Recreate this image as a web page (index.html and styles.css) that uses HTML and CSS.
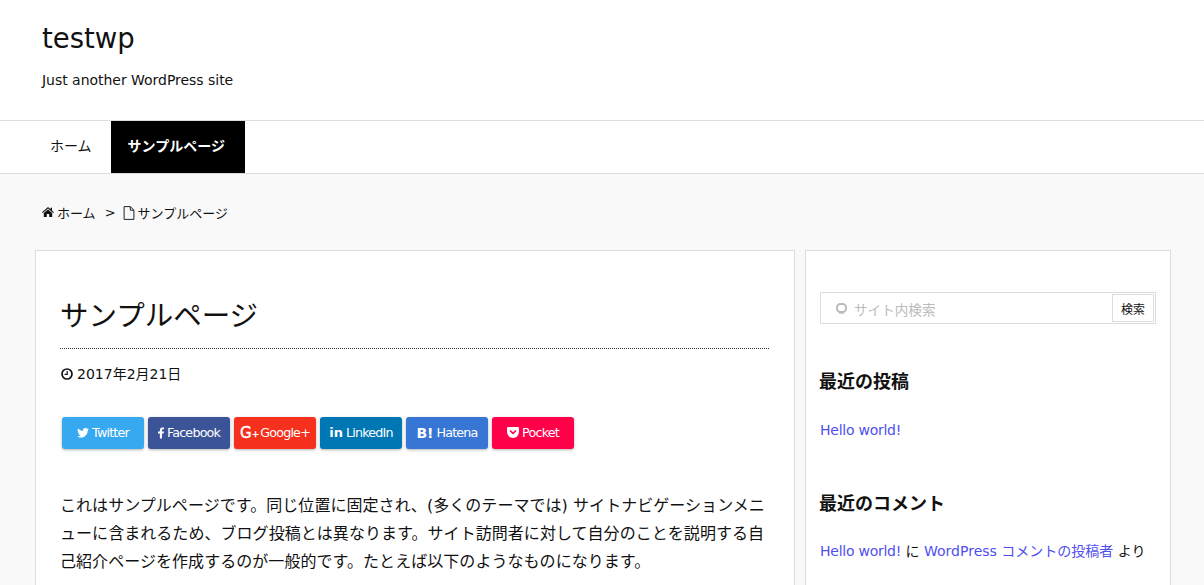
FILE: index.html
```html
<!DOCTYPE html>
<html lang="ja">
<head>
<meta charset="utf-8">
<title>サンプルページ | testwp</title>
<link rel="stylesheet" href="styles.css">
</head>
<body>
<div class="page">
  <header class="site-header">
    <h1 class="site-title">testwp</h1>
    <p class="site-desc">Just another WordPress site</p>
  </header>
  <nav class="site-nav">
    <a class="nav-item" href="#">ホーム</a>
    <a class="nav-item nav-current" href="#">サンプルページ</a>
  </nav>
  <div class="crumbs">
    <svg class="crumb-home" viewBox="0 0 12 10" width="12" height="10"><path d="M6 0 0 5.200l.7.8L6 1.500 11.300 6l.7-.8L10 3.500V.8H8.500v1.400zM1.800 6v4h3V7h2.400v3h3V6L6 2.500z" fill="#111"/></svg>
    <a class="crumb-link" href="#">ホーム</a>
    <span class="crumb-sep">&gt;</span>
    <svg class="crumb-doc" viewBox="0 0 11 14" width="12" height="14"><path d="M.6.600h6.200l3.600 3.600v9.200H.6zM6.800.600v3.600h3.600" fill="none" stroke="#222" stroke-width="1"/></svg>
    <span class="crumb-text">サンプルページ</span>
  </div>
  <div class="columns">
    <main class="card article">
      <h2 class="entry-title">サンプルページ</h2>
      <div class="entry-date">
        <svg viewBox="0 0 12 12" width="12" height="12"><circle cx="6" cy="6" r="5" fill="none" stroke="#111" stroke-width="1.700"/><path d="M6.200 3v3.400H3.600" fill="none" stroke="#111" stroke-width="1.200"/></svg>
        <span>2017年2月21日</span>
      </div>
      <div class="shares">
        <a class="share twitter" href="#"><svg viewBox="0 0 14 12" width="12" height="10"><path d="M14 1.400a5.700 5.700 0 0 1-1.650.45A2.900 2.900 0 0 0 13.600.25a5.700 5.700 0 0 1-1.820.7A2.870 2.870 0 0 0 6.900 3.550 8.150 8.150 0 0 1 1 .55a2.870 2.870 0 0 0 .89 3.830 2.860 2.860 0 0 1-1.300-.36c0 1.400 1 2.600 2.300 2.860a2.870 2.870 0 0 1-1.300.05 2.870 2.870 0 0 0 2.680 2A5.760 5.760 0 0 1 0 10.100 8.130 8.130 0 0 0 12.560 3.250 5.800 5.800 0 0 0 14 1.400z" fill="#fff"/></svg>Twitter</a>
        <a class="share facebook" href="#"><svg viewBox="0 0 7 13" width="6" height="12"><path d="M4.600 13V7.100h2l.3-2.300H4.600V3.300c0-.7.200-1.100 1.100-1.100H7V.1C6.800.1 6 0 5.200 0 3.400 0 2.200 1.100 2.200 3.100v1.700H0v2.300h2.200V13z" fill="#fff"/></svg>Facebook</a>
        <a class="share google" href="#"><span class="gplus">G<small>+</small></span>Google+</a>
        <a class="share linkedin" href="#"><span class="inmark">in</span>LinkedIn</a>
        <a class="share hatena" href="#"><span class="bmark">B!</span>Hatena</a>
        <a class="share pocket" href="#"><svg viewBox="0 0 13 12" width="12" height="11"><path d="M1.300 0h10.400c.7 0 1.300.6 1.300 1.300v4.200a6.500 6.500 0 0 1-13 0V1.300C0 .6.600 0 1.300 0z" fill="#fff"/><path d="m3.700 4.300 2.800 2.700 2.800-2.700" fill="none" stroke="#ff0049" stroke-width="1.700" stroke-linecap="round"/></svg>Pocket</a>
      </div>
      <p class="entry-body">これはサンプルページです。同じ位置に固定され、(多くのテーマでは) サイトナビゲーションメニューに含まれるため、ブログ投稿とは異なります。サイト訪問者に対して自分のことを説明する自己紹介ページを作成するのが一般的です。たとえば以下のようなものになります。</p>
    </main>
    <aside class="card sidebar">
      <form class="search">
        <div class="search-hint"><svg class="search-glyph" viewBox="0 0 11 11" width="11" height="11"><rect x="1" y="1" width="9" height="8" rx="3.500" fill="none" stroke="#bbb" stroke-width="2"/><path d="M3 10h5" stroke="#bbb" stroke-width="1.500"/></svg>サイト内検索</div>
        <button class="search-btn" type="button">検索</button>
      </form>
      <h3 class="widget-title recent-posts">最近の投稿</h3>
      <a class="link link-tight" href="#">Hello world!</a>
      <h3 class="widget-title recent-comments">最近のコメント</h3>
      <p class="comment"><a class="link link-tight" href="#">Hello world!</a> に <a class="link" href="#">WordPress コメントの投稿者</a> より</p>
    </aside>
  </div>
</div>
</body>
</html>
```
FILE: styles.css
```css
* { box-sizing: border-box; }
html, body { margin: 0; padding: 0; }
body {
  background: #f9f9f9;
  color: #111;
  font-family: "DejaVu Sans", "Noto Sans CJK JP", sans-serif;
  font-size: 14px;
}
.page { height: 585px; overflow: hidden; }
a { text-decoration: none; color: inherit; }

.site-header {
  height: 121px;
  background: #fff;
  border-bottom: 1px solid #ddd;
  padding: 20px 42px 0;
}
.site-title { margin: 0; font-size: 27.500px; font-weight: 400; line-height: 36px; color: #111; }
.site-desc { margin: 14px 0 0; font-size: 14px; line-height: 20px; letter-spacing: -.03px; }

.site-nav {
  display: flex;
  height: 53px;
  background: #fff;
  border-bottom: 1px solid #ddd;
  padding-left: 35px;
}
.nav-item {
  display: flex;
  align-items: center;
  padding: 0 18px 5px 15px;
  font-size: 14px;
  height: 52px;
  white-space: nowrap;
}
.nav-current {
  background: #000;
  color: #fff;
  font-weight: 700;
  padding: 0 0 5px 17px;
  width: 134px;
  margin-left: 1px;
}

.crumbs {
  display: flex;
  align-items: center;
  height: 76px;
  padding: 0 42px 0;
  font-size: 13px;
}
.crumb-home { margin-right: 3px; }
.crumb-sep { margin: 0 7px 0 9px; }
.crumb-doc { margin: 1px 3px 0 0; }

.columns {
  display: flex;
  gap: 10px;
  padding-left: 35px;
  align-items: stretch;
}
.card { background: #fff; border: 1px solid #ddd; }
.article { width: 760px; height: 400px; padding: 25px 25px 0 25px; }
.sidebar { width: 366px; height: 400px; padding: 41px 14px 0; }

.entry-title {
  margin: 0 0 0 -1px;
  padding: 21px 0 11px;
  font-size: 28.500px;
  line-height: 40px;
  font-weight: 400;
  border-bottom: 1px dotted #333;
}
.entry-date {
  display: flex;
  align-items: center;
  gap: 4px;
  margin-top: 15px;
  line-height: 20px;
  font-size: 14px;
}
.shares { display: flex; gap: 4px; margin: 33px 0 0 1px; }
.share {
  display: flex;
  align-items: center;
  justify-content: center;
  gap: 3px;
  width: 82px;
  height: 32px;
  padding-bottom: 1px;
  border-radius: 3px;
  color: #fff;
  font-size: 12.700px;
  letter-spacing: -.8px;
  box-shadow: 0 1px 3px rgba(0,0,0,.3);
}
.twitter { background: #37a9f0; }
.facebook { background: #3b5497; }
.google { background: #f5301c; gap: 1px; }
.linkedin { background: #0077b5; }
.hatena { background: #3776d4; }
.pocket { background: #ff0049; }
.gplus { font-weight: 400; font-size: 15px; letter-spacing: 0; -webkit-text-stroke: .4px #fff; }
.gplus small { font-size: 9px; vertical-align: 1px; }
.inmark { font-weight: 700; font-size: 13px; letter-spacing: 0; }
.bmark { font-weight: 700; font-size: 14px; letter-spacing: 0; }

.entry-body { margin: 43px 0 0 -1px; font-size: 16px; line-height: 28px; width: 710px; letter-spacing: .05px; }

.search {
  display: flex;
  align-items: center;
  justify-content: space-between;
  height: 32px;
  border: 1px solid #ddd;
  padding: 0 1px;
}
.search-hint {
  display: flex;
  align-items: center;
  padding: 1px 0 0 14px;
  color: #bbb;
  font-size: 13.600px;
}
.search-glyph { margin-right: 7px; }
.search-btn {
  width: 42px;
  height: 28px;
  padding: 0;
  background: #fff;
  border: 1px solid #ddd;
  color: #111;
  font: inherit;
  font-size: 12px;
}
.widget-title { margin: 0 0 0 -1px; font-size: 18px; line-height: 26px; font-weight: 700; }
.recent-posts { margin-top: 45px; margin-bottom: 27px; }
.recent-comments { margin-top: 53px; margin-bottom: 22px; }
.link { color: #4f4ff0; }
.link-tight { letter-spacing: -.25px; }
.comment { margin: 0; line-height: 24px; }
```
